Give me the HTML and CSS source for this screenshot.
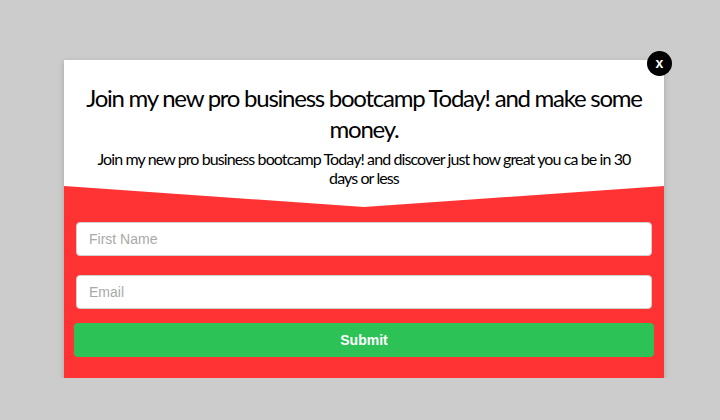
FILE: index.html
```html
<!DOCTYPE html>
<html lang="en">
<head>
<meta charset="utf-8">
<title>Bootcamp popup</title>
<link rel="stylesheet" href="styles.css">
</head>
<body>
<div class="stage">
  <div class="popup">
    <div class="header">
      <h1 class="title">Join my new pro business bootcamp Today! and make some money.</h1>
      <p class="subtitle">Join my new pro business bootcamp Today! and discover just how great you ca be in 30 days or less</p>
    </div>
    <form class="form">
      <input class="field" type="text" placeholder="First Name">
      <input class="field" type="email" placeholder="Email">
      <button class="submit" type="button">Submit</button>
    </form>
    <button class="close" type="button">x</button>
  </div>
</div>
</body>
</html>
```

FILE: styles.css
```css
html, body {
  margin: 0;
  padding: 0;
  background: #cccccc;
}
.stage {
  padding: 60px 0 0 64px;
}
.popup {
  position: relative;
  width: 600px;
  background: #ff3334;
  box-shadow: 0 2px 6px rgba(0, 0, 0, 0.2);
}
.close {
  position: absolute;
  z-index: 2;
  top: -9px;
  right: -8px;
  width: 25px;
  height: 25px;
  border-radius: 50%;
  border: 0;
  padding: 0 0 2px 0;
  background: #000;
  color: #fff;
  font-family: "Liberation Sans", Arial, sans-serif;
  font-weight: bold;
  font-size: 14px;
  line-height: 22px;
  text-align: center;
}
.header {
  background: #fff;
  padding: 22px 20px 20px;
  text-align: center;
  color: #000;
  font-family: Lato, sans-serif;
  clip-path: polygon(0 0, 100% 0, 100% calc(100% - 21px), 50% 100%, 0 calc(100% - 21px));
}
.title {
  margin: 0;
  font-size: 24px;
  letter-spacing: -1.25px;
  font-weight: normal;
  line-height: 31px;
}
.subtitle {
  margin: 5px 0 0;
  font-size: 16px;
  letter-spacing: -0.9px;
  line-height: 19px;
}
.form {
  display: flex;
  flex-direction: column;
  padding: 15px 10px 21px;
  margin: 0;
}
.field {
  margin: 0 2px 19px;
  height: 34px;
  box-sizing: border-box;
  border: 1px solid #cfcfcf;
  border-radius: 4px;
  padding: 0 12px;
  background: #fff;
  font-family: "Liberation Sans", Arial, sans-serif;
  font-size: 14px;
  color: #333;
}
.field:nth-of-type(2) {
  margin-bottom: 14px;
}
.field::placeholder {
  color: #a9a9a9;
}
.submit {
  height: 34px;
  border: 0;
  border-radius: 4px;
  background: #2cc255;
  color: #fff;
  font-family: "Liberation Sans", Arial, sans-serif;
  font-weight: bold;
  font-size: 14px;
}
```
